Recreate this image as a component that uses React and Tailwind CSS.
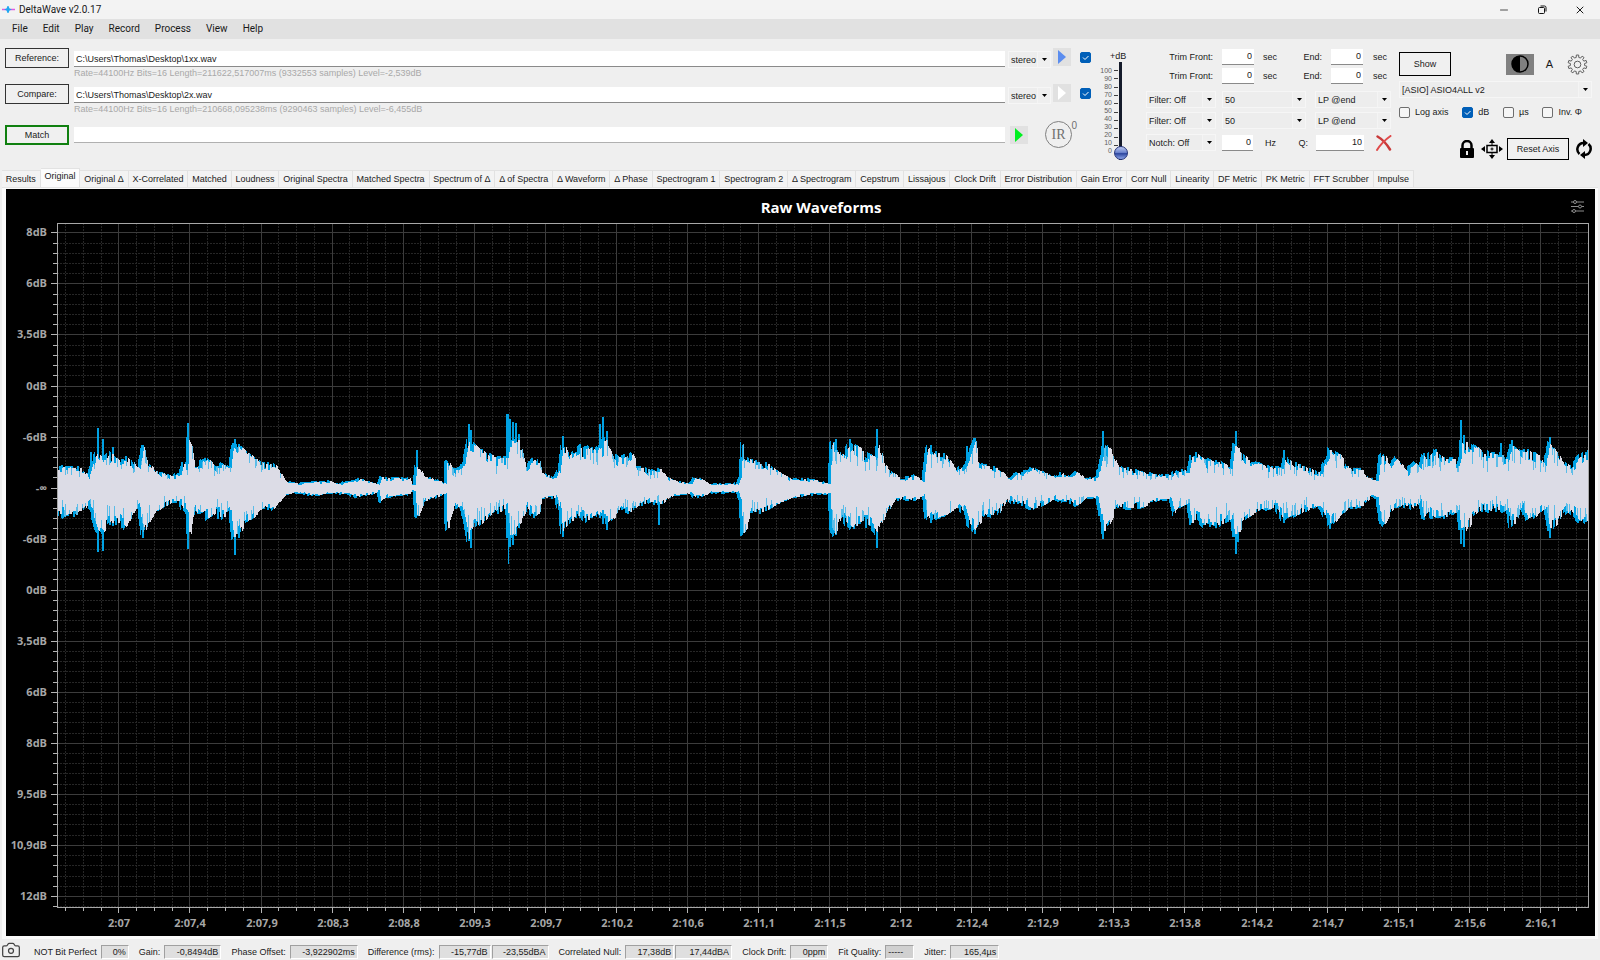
import React, { useState } from 'react';
import { Camera, Minus, X } from 'lucide-react';

const MENU = ['File', 'Edit', 'Play', 'Record', 'Process', 'View', 'Help'];

const TABS = [
  'Results', 'Original', 'Original Δ', 'X-Correlated', 'Matched', 'Loudness', 'Original Spectra',
  'Matched Spectra', 'Spectrum of Δ', 'Δ of Spectra', 'Δ Waveform', 'Δ Phase', 'Spectrogram 1',
  'Spectrogram 2', 'Δ Spectrogram', 'Cepstrum', 'Lissajous', 'Clock Drift', 'Error Distribution',
  'Gain Error', 'Corr Null', 'Linearity', 'DF Metric', 'PK Metric', 'FFT Scrubber', 'Impulse'
];

const STATUS = [
  { label: 'NOT Bit Perfect', fields: [{ value: '0%', width: 'w-7' }] },
  { label: 'Gain:', fields: [{ value: '-0,8494dB', width: 'w-[57px]' }] },
  { label: 'Phase Offset:', fields: [{ value: '-3,922902ms', width: 'w-[68px]' }] },
  { label: 'Difference (rms):', fields: [{ value: '-15,77dB', width: 'w-[52px]' }, { value: '-23,55dBA', width: 'w-[57px]' }] },
  { label: 'Correlated Null:', fields: [{ value: '17,38dB', width: 'w-[49px]' }, { value: '17,44dBA', width: 'w-[57px]' }] },
  { label: 'Clock Drift:', fields: [{ value: '0ppm', width: 'w-[38px]' }] },
  { label: 'Fit Quality:', fields: [{ value: '-----', width: 'w-[29px]', dark: true }] },
  { label: 'Jitter:', fields: [{ value: '165,4µs', width: 'w-[49px]' }] }
];

const Y_LABELS = ['8dB', '6dB', '3,5dB', '0dB', '-6dB', '-∞', '-6dB', '0dB', '3,5dB', '6dB', '8dB', '9,5dB', '10,9dB', '12dB'];

const X_LABELS = [
  '2:07', '2:07,4', '2:07,9', '2:08,3', '2:08,8', '2:09,3', '2:09,7', '2:10,2', '2:10,6', '2:11,1', '2:11,5',
  '2:12', '2:12,4', '2:12,9', '2:13,3', '2:13,8', '2:14,2', '2:14,7', '2:15,1', '2:15,6', '2:16,1'
];

// x, height above the centre line, depth below it
const ENVELOPE = [
  [57, 17, 22], [65, 20, 26], [74, 18, 25], [84, 18, 23], [89, 10, 14], [93, 24, 26], [98, 34, 38], [103, 26, 42],
  [112, 32, 34], [119, 28, 34], [126, 28, 36], [133, 26, 25], [139, 18, 18], [140, 18, 18], [143, 40, 44], [148, 26, 34],
  [155, 18, 24], [162, 14, 18], [172, 11, 14], [181, 13, 14], [184, 22, 20], [188, 22, 22], [189, 44, 40], [192, 40, 44],
  [195, 18, 20], [200, 22, 27], [208, 30, 28], [215, 20, 24], [224, 22, 28], [231, 20, 22], [234, 42, 46], [238, 38, 44],
  [244, 36, 36], [255, 28, 26], [265, 22, 18], [274, 24, 20], [281, 14, 12], [286, 6, 6], [300, 4, 4], [313, 5, 7],
  [331, 6, 5], [341, 4, 5], [360, 8, 8], [375, 5, 5], [379, 3, 2], [381, 10, 12], [387, 9, 8], [410, 9, 6], [412, 3, 2],
  [415, 3, 3], [417, 22, 27], [419, 21, 26], [425, 11, 13], [437, 8, 9], [446, 4, 6], [447, 25, 38], [449, 24, 37],
  [455, 16, 18], [461, 18, 17], [466, 30, 32], [469, 44, 46], [473, 42, 38], [482, 34, 33], [492, 30, 24], [507, 28, 20],
  [509, 44, 46], [513, 44, 44], [521, 44, 34], [527, 18, 18], [534, 26, 26], [540, 25, 24], [542, 14, 9], [556, 10, 9],
  [560, 17, 19], [563, 44, 44], [565, 42, 42], [570, 31, 32], [578, 37, 28], [587, 38, 30], [597, 34, 24], [604, 44, 30],
  [608, 44, 32], [614, 30, 28], [623, 28, 22], [633, 32, 22], [638, 20, 17], [650, 17, 13], [661, 17, 15], [668, 10, 11],
  [678, 6, 6], [692, 4, 5], [695, 9, 8], [702, 8, 8], [712, 3, 4], [738, 4, 4], [741, 10, 10], [743, 40, 42],
  [747, 30, 38], [752, 25, 22], [764, 25, 22], [774, 18, 17], [792, 8, 9], [812, 8, 6], [830, 4, 5], [832, 40, 36],
  [835, 44, 44], [842, 30, 26], [847, 38, 32], [852, 44, 38], [861, 36, 34], [869, 34, 34], [875, 28, 38], [879, 40, 42],
  [885, 24, 27], [895, 13, 11], [905, 9, 10], [916, 11, 11], [924, 6, 8], [927, 34, 26], [930, 38, 32], [935, 34, 28],
  [948, 29, 24], [959, 17, 17], [966, 22, 24], [969, 26, 36], [976, 44, 44], [979, 25, 34], [988, 20, 24], [998, 18, 26],
  [1010, 9, 10], [1015, 14, 15], [1024, 14, 15], [1033, 18, 19], [1046, 14, 15], [1055, 10, 10], [1064, 14, 12],
  [1070, 10, 11], [1077, 15, 17], [1087, 8, 9], [1098, 10, 9], [1101, 26, 26], [1103, 34, 40], [1106, 41, 38],
  [1112, 34, 30], [1119, 19, 17], [1132, 17, 19], [1146, 14, 17], [1163, 11, 10], [1172, 12, 12], [1175, 14, 24],
  [1180, 16, 17], [1189, 16, 19], [1192, 30, 32], [1198, 31, 31], [1205, 26, 34], [1222, 24, 34], [1232, 18, 28],
  [1235, 39, 42], [1239, 36, 42], [1248, 27, 27], [1260, 22, 21], [1277, 18, 19], [1283, 18, 28], [1286, 30, 30],
  [1294, 22, 26], [1304, 21, 22], [1320, 14, 16], [1326, 24, 26], [1330, 36, 36], [1341, 30, 26], [1351, 17, 17],
  [1363, 17, 18], [1372, 8, 8], [1378, 8, 9], [1381, 28, 32], [1385, 31, 34], [1391, 20, 22], [1397, 27, 17],
  [1408, 16, 17], [1416, 24, 19], [1421, 17, 12], [1424, 31, 28], [1428, 28, 25], [1435, 34, 27], [1447, 26, 26],
  [1459, 26, 22], [1462, 44, 44], [1466, 42, 42], [1473, 41, 30], [1482, 34, 20], [1494, 31, 21], [1508, 31, 21],
  [1511, 38, 34], [1518, 38, 32], [1523, 33, 20], [1528, 34, 32], [1539, 31, 24], [1546, 20, 20], [1549, 44, 38],
  [1554, 37, 38], [1563, 25, 25], [1571, 20, 21], [1580, 28, 30], [1588, 32, 32]
];

const PEAKS = [
  [90, 36, 20], [97, 60, 64], [102, 49, 63], [112, 41, 38], [142, 43, 50], [187, 65, 61], [232, 45, 40], [234, 49, 67],
  [238, 44, 50], [379, 10, 15], [416, 38, 28], [445, 28, 41], [465, 38, 36], [468, 64, 53], [470, 58, 60], [506, 74, 50],
  [507, 74, 76], [509, 69, 59], [512, 66, 57], [515, 65, 48], [518, 54, 40], [562, 52, 49], [579, 44, 30], [599, 64, 30],
  [602, 71, 36], [606, 57, 42], [658, 19, 37], [742, 43, 45], [833, 46, 42], [835, 49, 47], [849, 49, 40], [876, 59, 60],
  [930, 43, 35], [966, 42, 38], [974, 50, 46], [1102, 57, 51], [1235, 57, 66], [1237, 40, 54], [1283, 38, 35],
  [1329, 38, 41], [1382, 33, 37], [1423, 35, 32], [1435, 39, 28], [1460, 68, 56], [1463, 53, 59], [1500, 45, 24],
  [1511, 48, 36], [1549, 51, 50]
];

// Plot frame and grid inside the 1589 x 747 chart
const LEFT = 51;
const RIGHT = 1582;
const TOP = 34;
const BOTTOM = 718;
const MID = 299;
const yAt = (i) => Math.round(43.4 + i * 51.04);
const xAt = (i) => Math.round(112.4 + i * 71.07);

const noise = (n) => {
  const v = Math.sin(n * 127.1) * 43758.5453;
  return v - Math.floor(v);
};

const levelAt = (x, side) => {
  const next = ENVELOPE.findIndex((p) => p[0] >= x);
  if (next <= 0) return ENVELOPE[next === 0 ? 0 : ENVELOPE.length - 1][side];
  const a = ENVELOPE[next - 1];
  const b = ENVELOPE[next];
  return a[side] + ((b[side] - a[side]) * (x - a[0])) / (b[0] - a[0]);
};

// The compared track runs three pixels ahead of the reference track
const track = (x, side, seed) => {
  const level = levelAt(x, side);
  return level * (1.1 - 0.36 * noise(Math.floor(x / 2) + seed) ** 2);
};

const columns = [];
for (let x = 57; x < 1588; x += 1) {
  const peak = PEAKS.find((p) => p[0] === x || p[0] + 1 === x);
  const blueUp = track(x + 3, 1, 0) * 1.04 + 1;
  const blueDown = track(x + 3, 2, 5000) * 1.04 + 1;
  const up = track(x, 1, 0);
  const down = track(x, 2, 5000);
  columns.push({
    x: x - 6,
    blueUp: Math.round(peak ? Math.max(peak[1], blueUp) : blueUp),
    blueDown: Math.round(peak ? Math.max(peak[2], blueDown) : blueDown),
    up: Math.round(up),
    down: Math.round(down),
    streakUp: up > 12 && noise(x + 900) > 0.82 ? Math.round(up * (0.15 + noise(x) * 0.25)) : 0,
    streakDown: down > 12 && noise(x + 1700) > 0.8 ? Math.round(down * (0.15 + noise(x) * 0.35)) : 0
  });
}

const bluePath = columns.map((c) => `M${c.x} ${MID - c.blueUp}h1V${MID + c.blueDown}h-1z`).join('');
const whitePath = columns.map((c) => `M${c.x} ${MID - c.up}h1V${MID + c.down}h-1z`).join('');
const streakPath = columns
  .map((c) => (c.streakUp ? `M${c.x} ${MID - c.up}h1v${c.streakUp}h-1z` : '') + (c.streakDown ? `M${c.x} ${MID + c.down}h1v-${c.streakDown}h-1z` : ''))
  .join('');

const minorX = [];
for (let i = -3; i < 83; i += 1) {
  const x = Math.round(112.4 + i * 17.77);
  if (i % 4 !== 0 && x < RIGHT) minorX.push(x);
}
const minorY = [];
for (let i = 0; i < 67; i += 1) {
  if (i % 5 !== 0) minorY.push(Math.round(43.4 + i * 10.208));
}

const WaveformChart = () => (
  <svg viewBox="0 0 1589 747" className="block h-auto w-full bg-black" role="img" aria-label="Raw Waveforms">
    <g shapeRendering="crispEdges">
      <g stroke="#262626" strokeDasharray="2 1">
        {minorX.map((x) => <path key={x} d={`M${x + 0.5} ${TOP}V${BOTTOM}`} />)}
        {minorY.map((y) => <path key={y} d={`M${LEFT} ${y + 0.5}H${RIGHT}`} />)}
      </g>
      <g stroke="#3c3c3c">
        {X_LABELS.map((label, i) => <path key={label} d={`M${xAt(i) + 0.5} ${TOP}V${BOTTOM}`} />)}
        {Y_LABELS.map((label, i) => <path key={i} d={`M${LEFT} ${yAt(i) + 0.5}H${RIGHT}`} />)}
      </g>
      <path d={bluePath} fill="#00a2e4" />
      <path d={whitePath} fill="#dcdce6" />
      <path d={streakPath} fill="#5cbde8" />
      <path d={`M${LEFT} ${TOP}H${RIGHT}V${BOTTOM}H${LEFT}z`} fill="none" stroke="#a8a8a8" />
      <g stroke="#b4b4b4">
        {minorX.map((x) => <path key={x} d={`M${x + 0.5} ${BOTTOM}v4`} />)}
        {minorY.map((y) => <path key={y} d={`M${LEFT} ${y + 0.5}h-4`} />)}
        {X_LABELS.map((label, i) => <path key={label} d={`M${xAt(i) + 0.5} ${BOTTOM}v6`} />)}
        {Y_LABELS.map((label, i) => <path key={i} d={`M${LEFT} ${yAt(i) + 0.5}h-6`} />)}
      </g>
    </g>
    <g className="fill-[#a6a6a6] font-['Open_Sans',sans-serif] text-[11px] font-bold">
      {Y_LABELS.map((label, i) => <text key={i} x="41" y={yAt(i) + 4} textAnchor="end">{label}</text>)}
      {X_LABELS.map((label, i) => <text key={label} x={xAt(i) + 1} y="738" textAnchor="middle">{label}</text>)}
    </g>
    <text x="815" y="24" textAnchor="middle" className="fill-white font-['Open_Sans',sans-serif] text-[15px] font-bold">Raw Waveforms</text>
    <g stroke="#8c8c8c" fill="#000">
      <path d="M1565 13h13M1565 17.500h13M1565 22h13" />
      <circle cx="1569" cy="13" r="1.500" />
      <circle cx="1574" cy="17.500" r="1.500" />
      <circle cx="1568" cy="22" r="1.500" />
    </g>
  </svg>
);

const Select = ({ label, value, className }) => (
  <div className={`relative h-[17px] border border-[#f6f6f6] bg-[#ededed] ${className}`}>
    <select aria-label={label} className="block h-full w-full appearance-none pl-0.5 pr-3 leading-[14px] outline-none">
      <option>{value}</option>
    </select>
    <span className="pointer-events-none absolute right-0 top-0 flex h-full w-[13px] items-center justify-center border-l border-[#f4f4f4] bg-[#efefef]">
      <svg viewBox="0 0 5 3" className="h-[3px] w-[5px]"><path d="M0 0h5L2.500 3z" /></svg>
    </span>
  </div>
);

const NumberBox = ({ label, value, className }) => (
  <input aria-label={label} defaultValue={value} className={`h-4 border-b border-[#8a8a8a] bg-white pr-0.5 text-right outline-none ${className}`} />
);

const Check = ({ label, checked, hideLabel }) => (
  <label className="flex items-center gap-[5px]">
    <span className="relative flex">
      <input type="checkbox" defaultChecked={checked} aria-label={label} className="peer size-[11px] appearance-none rounded-[2px] border border-[#6e6e6e] bg-[#f6f6f6] checked:border-[#005fb8] checked:bg-[#005fb8]" />
      <svg viewBox="0 0 11 11" className="pointer-events-none absolute left-0 top-0 hidden size-[11px] peer-checked:block">
        <path d="M3 5.500l2 2 3.500-3.500" fill="none" stroke="#fff" />
      </svg>
    </span>
    {!hideLabel && <span>{label}</span>}
  </label>
);

const PlayButton = ({ label, color }) => (
  <button aria-label={label} className="flex h-[18px] w-[18px] items-center justify-center bg-[#e1e1e1]">
    <svg viewBox="0 0 8 14" className="h-[14px] w-2"><path d="M0 0l8 7-8 7z" fill={color} /></svg>
  </button>
);

const FileRow = ({ name, path, info, color }) => (
  <div className="flex h-9 items-start">
    <button className="mr-[5px] h-5 w-16 border border-[#333] bg-[#f0f0f0]">{name}:</button>
    <div className="mr-[3px] min-w-0 flex-1 pt-[3px]">
      <input aria-label={`${name} file`} defaultValue={path} className="block h-4 w-full border-b border-[#8a8a8a] bg-white px-0.5 outline-none" />
      <p className="h-3 leading-3 text-[#a9a9a9]">{info}</p>
    </div>
    <Select label={`${name} channels`} value="stereo" className="mr-0.5 mt-[3px] w-[43px]" />
    <PlayButton label={`Play ${name}`} color={color} />
    <div className="ml-[9px] mt-1"><Check label={`Use ${name}`} checked hideLabel /></div>
  </div>
);

const FilePanel = () => (
  <div className="min-w-0 flex-1 pt-[9px]">
    <FileRow name="Reference" path="C:\Users\Thomas\Desktop\1xx.wav" info="Rate=44100Hz Bits=16 Length=211622,517007ms (9332553 samples) Level=-2,539dB" color="#5b8def" />
    <FileRow name="Compare" path="C:\Users\Thomas\Desktop\2x.wav" info="Rate=44100Hz Bits=16 Length=210668,095238ms (9290463 samples) Level=-6,455dB" color="#ffffff" />
    <div className="flex items-center pt-px">
      <button className="mr-[5px] h-5 w-16 border-2 border-[#108010] bg-[#f0f0f0]">Match</button>
      <input aria-label="Match status" className="h-4 min-w-0 flex-1 border-b border-[#b0b0b0] bg-white outline-none" />
      <div className="ml-[5px] flex w-[81px] items-center">
        <PlayButton label="Play match" color="#00f020" />
        <button className="relative ml-[17px] size-[27px] rounded-full border border-[#808080] font-['Liberation_Serif',serif] text-sm leading-none text-[#707070]">
          IR
          <span className="absolute -right-1.5 -top-px font-['Liberation_Sans',sans-serif] text-[10px] leading-none">0</span>
        </button>
      </div>
    </div>
  </div>
);

const VolumeSlider = () => (
  <div className="ml-1.5 w-8 pt-[11px]">
    <label htmlFor="gain" className="block h-3 pl-[13px] leading-3">+dB</label>
    <div className="flex">
      <div className="w-[15px] shrink-0 pt-[5px] text-right text-[7px] leading-[8px] text-[#606060]">
        {[100, 90, 80, 70, 60, 50, 40, 30, 20, 10, 0].map((n) => <div key={n} className="h-[8px]">{n}</div>)}
      </div>
      <div className="ml-0.5 mt-2 flex h-[76px] w-1 shrink-0 flex-col justify-between">
        {[100, 90, 80, 70, 60, 50, 40, 30, 20, 10].map((n) => <div key={n} className="h-px bg-[#404040]" />)}
      </div>
      <input
        id="gain"
        type="range"
        defaultValue="0"
        className="-ml-1 h-[98px] w-[14px] shrink-0 appearance-none bg-[linear-gradient(90deg,transparent_5px,#151b2b_5px,#151b2b_8px,transparent_8px)] [direction:rtl] [writing-mode:vertical-lr] [&::-webkit-slider-thumb]:size-[14px] [&::-webkit-slider-thumb]:appearance-none [&::-webkit-slider-thumb]:rounded-full [&::-webkit-slider-thumb]:border [&::-webkit-slider-thumb]:border-[#26357a] [&::-webkit-slider-thumb]:bg-[linear-gradient(#b9c6ee,#6f86cf_45%,#2d479f_55%,#8ea6ea)]"
      />
    </div>
  </div>
);

const TrimRow = ({ id }) => (
  <div className="flex h-[19px] items-center">
    <span className="w-[67px] text-right">Trim Front:</span>
    <NumberBox label={`Trim front ${id}`} value="0" className="ml-[9px] w-8" />
    <span className="ml-[9px] w-4">sec</span>
    <span className="w-[43px] text-right">End:</span>
    <NumberBox label={`Trim end ${id}`} value="0" className="ml-[9px] w-8" />
    <span className="ml-[10px]">sec</span>
  </div>
);

const FilterRow = ({ id }) => (
  <div className="flex h-[21px] items-center">
    <Select label={`Filter ${id}`} value="Filter: Off" className="mr-[6px] w-[70px]" />
    <Select label={`Frequency ${id}`} value="50" className="mr-[9px] w-[84px]" />
    <Select label={`Position ${id}`} value="LP @end" className="w-[76px]" />
  </div>
);

const FilterPanel = () => (
  <div className="ml-[17px] w-[246px] pt-2">
    <TrimRow id="1" />
    <TrimRow id="2" />
    <div className="mt-1">
      <FilterRow id="1" />
      <FilterRow id="2" />
    </div>
    <div className="mt-0.5 flex h-[19px] items-center">
      <Select label="Notch" value="Notch: Off" className="mr-[6px] w-[70px]" />
      <NumberBox label="Notch frequency" value="0" className="w-[31px]" />
      <span className="ml-3">Hz</span>
      <span className="ml-auto mr-2">Q:</span>
      <NumberBox label="Notch Q" value="10" className="mr-3 w-12" />
      <button aria-label="Clear filters">
        <svg viewBox="0 0 16 16" className="size-4" fill="none" strokeLinecap="round">
          <path d="M1.500 1.500q7 4 12.500 13" stroke="#c93a3a" strokeWidth="2.500" />
          <path d="M14.500 1Q6 7 1 15" stroke="#e04a4a" strokeWidth="2" />
        </svg>
      </button>
    </div>
  </div>
);

const TEETH = 10;
const gearPath = Array.from({ length: TEETH }, (_, i) => {
  const at = (r, offset) => {
    const a = ((i + offset) / TEETH) * Math.PI * 2 - Math.PI / 2;
    return `${(11 + r * Math.cos(a)).toFixed(2)} ${(11 + r * Math.sin(a)).toFixed(2)}`;
  };
  return `${i ? 'L' : 'M'}${at(7.5, -0.28)}L${at(10, -0.2)}L${at(10, 0.2)}L${at(7.5, 0.28)}`;
}).join('') + 'z';

const ToolsPanel = () => (
  <div className="ml-[7px] w-[193px] pt-[13px]">
    <div className="flex h-6 items-center pr-1">
      <button className="h-6 w-[52px] border border-black bg-[#f0f0f0]">Show</button>
      <button aria-label="Contrast" className="ml-auto flex h-[21px] w-7 items-center justify-center bg-[#808080]">
        <svg viewBox="0 0 18 18" className="size-[18px]"><circle cx="9" cy="9" r="8" fill="none" stroke="#000" strokeWidth="1.500" /><path d="M9 1a8 8 0 0 0 0 16z" /></svg>
      </button>
      <button className="ml-3 text-[11px]">A</button>
      <button aria-label="Settings" className="ml-[14px]">
        <svg viewBox="0 0 22 22" className="size-[21px]" fill="none" stroke="#5a5a5a" strokeLinejoin="round">
          <path d={gearPath} />
          <circle cx="11" cy="11" r="3.500" />
        </svg>
      </button>
    </div>
    <Select label="Audio device" value="[ASIO] ASIO4ALL v2" className="mt-[5px] w-full" />
    <div className="mt-2 flex h-3 items-center justify-between pr-[10px]">
      <Check label="Log axis" />
      <Check label="dB" checked />
      <Check label="µs" />
      <Check label="Inv. Φ" />
    </div>
    <div className="mt-5 flex h-[22px] items-center justify-end gap-1">
      <button aria-label="Lock axis">
        <svg viewBox="0 0 16 19" className="h-[19px] w-4">
          <path d="M3.500 9V5.500a4.500 4.500 0 0 1 9 0V9" fill="none" stroke="#000" strokeWidth="2.500" />
          <rect x="1" y="8" width="14" height="10" rx="1" />
          <path d="M8 11v4" stroke="#eee" strokeWidth="2" />
        </svg>
      </button>
      <button aria-label="Pan and zoom" className="ml-0.5">
        <svg viewBox="0 0 22 20" className="h-5 w-[22px]">
          <path d="M11 0l3 4H8zM11 20l3-4H8zM0 10l4-3v6zM22 10l-4-3v6z" />
          <rect x="6" y="6.500" width="10" height="7" fill="none" stroke="#000" strokeWidth="1.500" />
          <path d="M11 8.500v3M9.500 10h3M11 4v2M11 14v2" stroke="#000" />
        </svg>
      </button>
      <button className="h-[22px] w-[62px] border border-black bg-[#f0f0f0]">Reset Axis</button>
      <button aria-label="Refresh" className="ml-[3px]">
        <svg viewBox="0 0 16 20" className="h-5 w-4">
          <path d="M3.500 15A6.300 6.300 0 0 1 7.500 4M12.500 5A6.300 6.300 0 0 1 8.500 16" fill="none" stroke="#000" strokeWidth="2.500" />
          <path d="M7 0l5 4-5 4zM9 12l-5 4 5 4z" />
        </svg>
      </button>
    </div>
  </div>
);

const TitleBar = () => (
  <div className="flex h-[19px] items-center bg-[#f3f3f3] pl-0.5 pr-[14px]">
    <svg viewBox="0 0 13 9" className="h-[9px] w-[13px]">
      <path d="M0 4.500h13" stroke="#e05ae0" strokeWidth="1.500" />
      <path d="M2 4.500l2.500-1 1-2.500h1l1 2.500 2.500 1-2.500 1-1 2.500h-1l-1-2.500z" fill="#20a8f0" />
    </svg>
    <span className="ml-1 font-[Roboto,sans-serif] text-[10px]">DeltaWave v2.0.17</span>
    <div className="ml-auto flex items-center gap-[27px]">
      <button aria-label="Minimize"><Minus className="size-3" strokeWidth={1.5} /></button>
      <button aria-label="Restore">
        <svg viewBox="0 0 10 10" className="size-[10px]" fill="none" stroke="#111"><rect x="1.500" y="2.500" width="6" height="6" rx="1" /><path d="M3.500 1h4a1.500 1.500 0 0 1 1.500 1.500v4" /></svg>
      </button>
      <button aria-label="Close"><X className="size-3" strokeWidth={2} /></button>
    </div>
  </div>
);

const StatusBar = () => (
  <footer className="flex h-[21px] items-center pl-px pt-1">
    <button aria-label="Save picture" className="mr-[13px]"><Camera className="-mt-1 size-5 text-[#444]" strokeWidth={1.5} /></button>
    {STATUS.map((item) => (
      <div key={item.label} className="mr-[10px] flex items-center gap-1 whitespace-nowrap">
        <span>{item.label}</span>
        <div className="flex gap-px">
          {item.fields.map((field) => (
            <output key={field.value} className={`h-[14px] border border-b-white border-l-[#a0a0a0] border-r-white border-t-[#a0a0a0] px-0.5 leading-[13px] ${field.width} ${field.dark ? 'bg-[#d0d0d0] text-left' : 'bg-[#dfdfdf] text-right'}`}>
              {field.value}
            </output>
          ))}
        </div>
      </div>
    ))}
  </footer>
);

const App = () => {
  const [tab, setTab] = useState('Original');

  return (
    <div className="min-h-screen bg-[#efefef] font-['Liberation_Sans',Arial,sans-serif] text-[9px] leading-3 text-[#1a1a1a]">
      <TitleBar />
      <nav className="flex h-5 items-center gap-[15px] bg-[#e1e1e1] pl-3 font-[Roboto,sans-serif] text-[10px]">
        {MENU.map((item) => <button key={item}>{item}</button>)}
      </nav>
      <div className="flex h-[129px] items-start pl-[5px] pr-2">
        <FilePanel />
        <VolumeSlider />
        <FilterPanel />
        <ToolsPanel />
      </div>
      <div role="tablist" className="flex h-[19px] w-[1414px] max-w-full items-end pl-0.5">
        {TABS.map((name) => (
          <button
            key={name}
            role="tab"
            aria-selected={tab === name}
            onClick={() => setTab(name)}
            className={`flex-auto whitespace-nowrap border-r border-t border-[#e2e2e2] ${tab === name ? 'h-[19px] bg-[#fcfcfc] pb-1' : 'h-[17px] bg-[#f3f3f3]'}`}
          >
            {name}
          </button>
        ))}
      </div>
      <main className="mx-0.5 border-t border-[#e5e5e5] bg-[#fbfbfb] pb-[3px] pl-1 pr-[3px] pt-px">
        <WaveformChart />
      </main>
      <StatusBar />
    </div>
  );
};

export default App;
